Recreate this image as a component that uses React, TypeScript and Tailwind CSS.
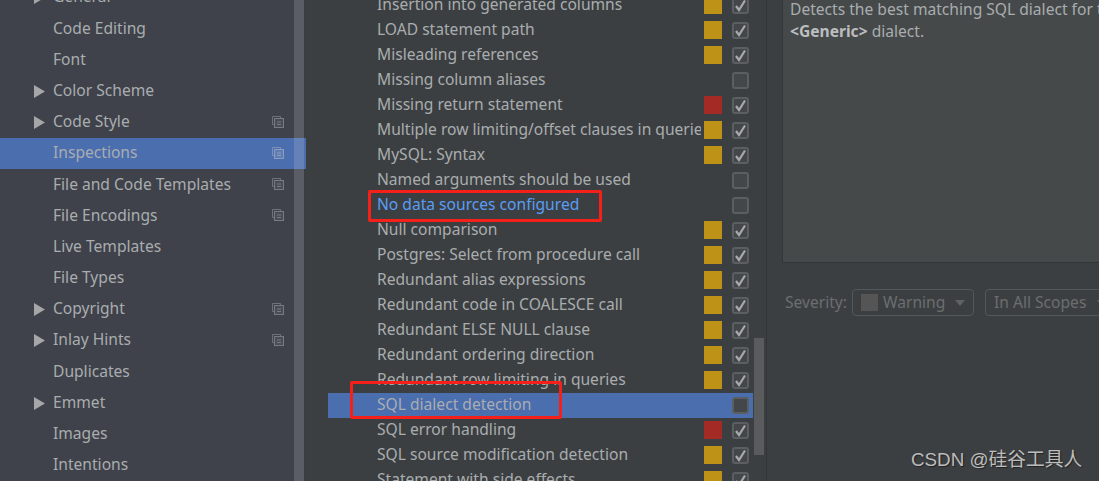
const FONT = "font-['Noto_Sans',sans-serif]";

type Side = { t: string; arrow?: boolean; copy?: boolean; sel?: boolean };
const side: Side[] = [
  { t: "General", arrow: true },
  { t: "Code Editing" },
  { t: "Font" },
  { t: "Color Scheme", arrow: true },
  { t: "Code Style", arrow: true, copy: true },
  { t: "Inspections", copy: true, sel: true },
  { t: "File and Code Templates", copy: true },
  { t: "File Encodings", copy: true },
  { t: "Live Templates" },
  { t: "File Types" },
  { t: "Copyright", arrow: true, copy: true },
  { t: "Inlay Hints", arrow: true, copy: true },
  { t: "Duplicates" },
  { t: "Emmet", arrow: true },
  { t: "Images" },
  { t: "Intentions" },
];

type Row = { t: string; s?: "w" | "e"; on: boolean; blue?: boolean; sel?: boolean };
const rows: Row[] = [
  { t: "Insertion into generated columns", s: "w", on: true },
  { t: "LOAD statement path", s: "w", on: true },
  { t: "Misleading references", s: "w", on: true },
  { t: "Missing column aliases", on: false },
  { t: "Missing return statement", s: "e", on: true },
  { t: "Multiple row limiting/offset clauses in queries", s: "w", on: true },
  { t: "MySQL: Syntax", s: "w", on: true },
  { t: "Named arguments should be used", on: false },
  { t: "No data sources configured", on: false, blue: true },
  { t: "Null comparison", s: "w", on: true },
  { t: "Postgres: Select from procedure call", s: "w", on: true },
  { t: "Redundant alias expressions", s: "w", on: true },
  { t: "Redundant code in COALESCE call", s: "w", on: true },
  { t: "Redundant ELSE NULL clause", s: "w", on: true },
  { t: "Redundant ordering direction", s: "w", on: true },
  { t: "Redundant row limiting in queries", s: "w", on: true },
  { t: "SQL dialect detection", on: false, sel: true },
  { t: "SQL error handling", s: "e", on: true },
  { t: "SQL source modification detection", s: "w", on: true },
  { t: "Statement with side effects", s: "w", on: true },
];

function CopyIcon({ sel }: { sel?: boolean }) {
  const back = sel ? "#7c8fb5" : "#6e7277";
  const front = sel ? "#8b9dbf" : "#777b80";
  const fill = sel ? "#5f7db5" : "#4a4d54";
  return (
    <svg width="12" height="12" viewBox="0 0 12 12" fill="none" className="mb-px">
      <path d="M8.5 2V0.5H0.5V8.5H2" stroke={back} />
      <rect x="2.5" y="2.5" width="9" height="9" fill={fill} stroke={front} />
      <path d="M5 6H9M5 8.5H9" stroke={front} />
    </svg>
  );
}

function Arrow() {
  return (
    <svg width="11" height="13" viewBox="0 0 11 13" className="shrink-0">
      <path d="M0 0L11 6.5L0 13Z" fill="#a4a6a8" />
    </svg>
  );
}

function Check({ on }: { on: boolean }) {
  return (
    <div className="w-[17px] h-[17px] shrink-0 rounded-[3px] border-2 border-[#5c5f61] bg-[#43474a] flex items-center justify-center">
      {on && (
        <svg width="13" height="13" viewBox="0 0 13 13" fill="none" stroke="#a8a9aa" strokeWidth="2.2">
          <path d="M2 7L5 11L11 1.5" />
        </svg>
      )}
    </div>
  );
}

export default function App() {
  return (
    <div className={`relative flex w-[1099px] h-[481px] overflow-hidden bg-[#3c3f41] text-[15.6px] text-[#a9adaf] ${FONT}`}>
      {/* left settings tree */}
      <div className="relative w-[306px] shrink-0 bg-[#3b3e40] overflow-hidden">
        <div className="w-[306px] mt-[-18px]">
          {side.map((r) => (
            <div
              key={r.t}
              className={`flex items-center h-[31.2px] pr-[2px] ${r.sel ? "bg-[#4b6eaf]" : ""}`}
            >
              <div className={`flex items-center h-full w-[294px] shrink-0 pl-[34px] pr-[10px] ${r.sel ? "" : "bg-[#3f424a]"}`}>
                <div className="w-[19px] shrink-0">{r.arrow && <Arrow />}</div>
                <span className="flex-1 whitespace-nowrap pb-px">{r.t}</span>
                {r.copy && <CopyIcon sel={r.sel} />}
              </div>
              <div className={`w-[10px] h-full shrink-0 ${r.sel ? "bg-[#6582b8]" : "bg-[#5a5d65]"}`} />
            </div>
          ))}
        </div>
      </div>

      <div className="w-[22px] shrink-0" />

      {/* inspection list */}
      <div className="relative w-[425px] shrink-0 overflow-hidden">
        <div className="mt-[-7.5px]">
          {rows.map((r) => (
            <div
              key={r.t}
              className={`flex items-center h-[25px] pl-[49px] pr-[4px] ${r.sel ? "bg-[#4b6eaf]" : ""}`}
            >
              <span className={`w-[324px] shrink-0 overflow-hidden whitespace-nowrap ${r.blue ? "text-[#589df6]" : ""}`}>
                {r.t}
              </span>
              <div className="w-[28px] ml-[3px] shrink-0">
                {r.s && <div className={`w-[18px] h-[18px] ${r.s === "w" ? "bg-[#be9117]" : "bg-[#a42a26]"}`} />}
              </div>
              <Check on={r.on} />
            </div>
          ))}
        </div>
      </div>

      {/* list scrollbar */}
      <div className="w-[14px] shrink-0 border-r border-[#323537] pl-px pt-[338px]">
        <div className="w-[10px] h-[117px] bg-[#595b5d]" />
      </div>

      {/* description pane */}
      <div className="flex-1 min-w-0 pl-[15px] overflow-hidden">
        <div className="h-[265px] w-[400px] bg-[#45494a] border-l border-b border-[#323537] pl-[7px] mt-[-2px] leading-[22px] whitespace-nowrap">
          <div>Detects the best matching SQL dialect for the file and uses it. Falls back to</div>
          <div>
            <b className="text-[#bbbdbe]">&lt;Generic&gt;</b> dialect.
          </div>
        </div>
        <div className="flex items-center mt-[26px] h-[27px] whitespace-nowrap text-[#6b6e70]">
          <span className="ml-[3px] w-[67px] shrink-0">Severity:</span>
          <div className="flex items-center shrink-0 w-[122px] h-[27px] border border-[#55585a] rounded-[4px] pl-2">
            <div className="w-[17px] h-[17px] bg-[#555556] mr-[5px]" />
            <span>Warning</span>
            <div className="ml-[10px] border-x-[5.5px] border-x-transparent border-t-[6px] border-t-[#5f6264]" />
          </div>
          <div className="flex items-center shrink-0 w-[140px] ml-[11px] h-[27px] border border-[#55585a] rounded-[4px] pl-2">
            <span>In All Scopes</span>
            <div className="ml-[11px] border-x-[5.5px] border-x-transparent border-t-[6px] border-t-[#5f6264]" />
          </div>
        </div>
      </div>

      {/* annotation rectangles drawn over the screenshot */}
      <div className="absolute left-[368px] top-[190px] w-[234px] h-[32px] border-[3px] border-[#f5201a] rounded-[2px]" />
      <div className="absolute left-[350px] top-[381px] w-[212px] h-[38px] border-[3px] border-[#f5201a] rounded-[2px]" />

      {/* watermark */}
      <div className="absolute left-[911px] top-[447px] text-[18.8px] leading-[26px] whitespace-nowrap text-[#bdbdbd] [text-shadow:1px_1px_1px_#222] font-['Liberation_Sans','Noto_Sans_CJK_SC',sans-serif]">
        CSDN @硅谷工具人
      </div>
    </div>
  );
}
